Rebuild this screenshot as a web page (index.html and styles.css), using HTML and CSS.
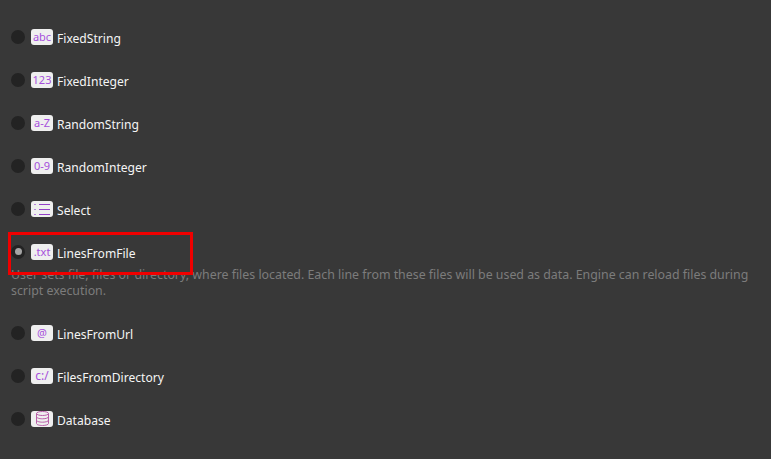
FILE: index.html
```html
<!DOCTYPE html>
<html lang="en">
<head>
  <meta charset="UTF-8">
  <title>Data sources</title>
  <link rel="stylesheet" href="styles.css">
</head>
<body>
  <div class="lista">
    <div class="fila">
      <span class="radio"></span>
      <span class="badge">abc</span>
      <span class="nombre">FixedString</span>
    </div>
    <div class="fila">
      <span class="radio"></span>
      <span class="badge">123</span>
      <span class="nombre">FixedInteger</span>
    </div>
    <div class="fila">
      <span class="radio"></span>
      <span class="badge">a-Z</span>
      <span class="nombre">RandomString</span>
    </div>
    <div class="fila">
      <span class="radio"></span>
      <span class="badge">0-9</span>
      <span class="nombre">RandomInteger</span>
    </div>
    <div class="fila">
      <span class="radio"></span>
      <span class="badge">
        <svg width="16" height="12" viewBox="0 0 16 12">
          <path d="M0 1.500h2M0 6.500h2M0 11.500h2" stroke="#b884de" stroke-width="1"/>
          <path d="M5 1.500h11M5 6.500h11M5 11.500h11" stroke="#9440c8" stroke-width="1"/>
        </svg>
      </span>
      <span class="nombre">Select</span>
    </div>
    <div class="fila activa">
      <span class="radio"><span class="punto"></span></span>
      <span class="badge">.txt</span>
      <span class="nombre">LinesFromFile</span>
    </div>
    <p class="descripcion">User sets file, files or directory, where files located. Each line from these files will be used as data. Engine can reload files during script execution.</p>
    <div class="fila">
      <span class="radio"></span>
      <span class="badge">@</span>
      <span class="nombre">LinesFromUrl</span>
    </div>
    <div class="fila">
      <span class="radio"></span>
      <span class="badge badge-ruta">c:/</span>
      <span class="nombre">FilesFromDirectory</span>
    </div>
    <div class="fila">
      <span class="radio"></span>
      <span class="badge">
        <svg width="13" height="15" viewBox="0 0 13 15" fill="none" stroke="#b85fa8" stroke-width="1">
          <ellipse cx="6.500" cy="2.500" rx="6" ry="2"/>
          <path d="M.5 2.500v10c0 1.100 2.700 2 6 2s6-.9 6-2v-10"/>
          <path d="M.5 5.800c0 1.100 2.700 2 6 2s6-.9 6-2M.5 9.200c0 1.100 2.700 2 6 2s6-.9 6-2"/>
        </svg>
      </span>
      <span class="nombre">Database</span>
    </div>
  </div>
  <div class="marca"></div>
</body>
</html>
```

FILE: styles.css
```css
html, body {
  height: 100%;
}

body {
  margin: 0;
  background: #383838;
  font-family: "Noto Sans", Tahoma, sans-serif;
  font-size: 12px;
  overflow: hidden;
}

.lista {
  padding: 17px 11px 0;
}

.fila {
  display: flex;
  align-items: center;
  height: 43px;
}

.radio {
  display: flex;
  align-items: center;
  justify-content: center;
  width: 14px;
  height: 14px;
  border-radius: 50%;
  background: #232323;
  margin-right: 6px;
  position: relative;
  top: -2px;
}

.punto {
  width: 7px;
  height: 7px;
  border-radius: 50%;
  background: #a5a5a5;
}

.badge {
  display: flex;
  align-items: center;
  justify-content: center;
  width: 22px;
  height: 16px;
  border-radius: 3px;
  background: #efefef;
  color: #a64fdc;
  font-size: 11px;
  margin-right: 4px;
  position: relative;
  top: -2px;
}

.badge-ruta {
  font-size: 12px;
}

.nombre {
  color: #f5f5f5;
  font-size: 12.1px;
}

.descripcion {
  margin: -8px 0 14px;
  color: #7c7c7c;
  font-size: 12.37px;
  line-height: 16px;
}

.marca {
  position: absolute;
  left: 8px;
  top: 232px;
  width: 179px;
  height: 37px;
  border: 3px solid #f00000;
}
```
